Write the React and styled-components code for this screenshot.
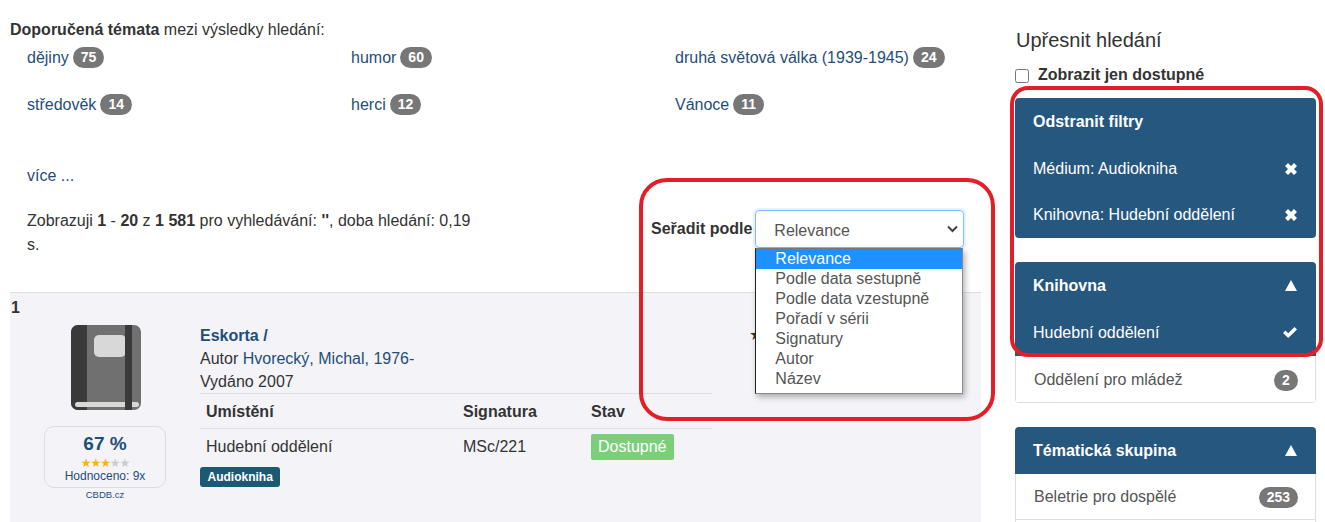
import React from "react";
import styled, { createGlobalStyle } from "styled-components";

const Global = createGlobalStyle`
    html, body {
        margin: 0;
        background: #fff;
    }
    body {
        font-family: "Liberation Sans", Arial, sans-serif;
        font-size: 16px;
        line-height: 24px;
        color: #333;
    }
`;

const Page = styled.div`
    position: relative;
    display: flex;
    width: 1325px;
    height: 522px;
    overflow: hidden;
`;

const Main = styled.main`
    width: 971px;
    margin-left: 10px;
    padding-top: 18px;
`;

const Side = styled.aside`
    width: 301px;
    margin-left: 34px;
    padding-top: 27px;
`;

const Intro = styled.div`
    height: 24px;
`;

const TopicGrid = styled.div`
    display: grid;
    grid-template-columns: repeat(3, 324px);
    grid-auto-rows: 47px;
    padding: 4px 0 0 17px;
`;

const Topic = styled.div`
    display: flex;
    align-items: flex-start;
    gap: 4px;
`;

const Link = styled.a`
    color: #1f4e79;
    text-decoration: none;
`;

const Count = styled.span`
    display: inline-block;
    min-width: 8px;
    margin-top: 1px;
    padding: 3px 8px 4px;
    font-size: 14px;
    line-height: 14px;
    font-weight: 700;
    color: #fff;
    text-align: center;
    background: #777;
    border-radius: 11px;
`;

const More = styled.div`
    padding: 24px 0 0 17px;
`;

const SortRow = styled.div`
    display: flex;
    height: 83px;
    padding: 21px 0 0 17px;
`;

const Summary = styled.div`
    width: 450px;
`;

const SortBox = styled.div`
    display: flex;
    align-items: flex-start;
    margin: 1px 0 0 174px;
`;

const SortLabel = styled.label`
    margin-right: 3px;
    padding-top: 7px;
    font-weight: 700;
`;

const Select = styled.div`
    position: relative;
    display: flex;
    align-items: center;
    justify-content: space-between;
    box-sizing: border-box;
    width: 209px;
    height: 38px;
    padding: 3px 5px 0 18px;
    color: #555;
    border: 1px solid #80bdff;
    border-radius: 4px;
    box-shadow: 0 0 0 2px rgba(128, 189, 255, 0.2);
`;

const Chevron = styled.svg`
    width: 11px;
    height: 8px;
    margin-top: -3px;
`;

const Dropdown = styled.ul`
    position: absolute;
    z-index: 2;
    top: 37px;
    left: -1px;
    box-sizing: border-box;
    width: 208px;
    height: 146px;
    margin: 0;
    padding: 0;
    list-style: none;
    background: #fff;
    border: 1px solid #8a8a8a;
    border-left-color: #222;
    border-top-color: #777;
    box-shadow: 2px 3px 6px rgba(0, 0, 0, 0.3);
`;

const Option = styled.li`
    height: 20px;
    padding-left: 19px;
    line-height: 20px;
    color: ${(p) => (p.$active ? "#fff" : "#555")};
    background: ${(p) => (p.$active ? "#1e90ff" : "transparent")};
`;

const Result = styled.article`
    display: flex;
    box-sizing: border-box;
    height: 240px;
    background: #f3f3f8;
    border-top: 1px solid #dedede;
`;

const Cover = styled.div`
    display: flex;
    flex-direction: column;
    width: 190px;
    flex: none;
`;

const Number = styled.div`
    height: 28px;
    padding: 4px 0 0 1px;
    font-size: 16px;
    line-height: 22px;
    font-weight: 700;
`;

const BookIcon = styled.svg`
    display: block;
    width: 70px;
    height: 86px;
    margin-left: 61px;
`;

const Rating = styled.div`
    box-sizing: border-box;
    width: 122px;
    height: 62px;
    margin: 15px 0 0 34px;
    padding-top: 6px;
    text-align: center;
    border: 1px solid #dcdce2;
    border-radius: 10px;
`;

const Percent = styled.div`
    height: 25px;
    font-size: 19px;
    line-height: 22px;
    font-weight: 700;
    color: #1f4e79;
`;

const Stars = styled.div`
    height: 11px;
    font-family: "DejaVu Sans", sans-serif;
    font-size: 12px;
    line-height: 11px;
    letter-spacing: -1.1px;
    color: #ccc;
    span {
        color: #f5b21b;
    }
`;

const RatedBy = styled.div`
    font-size: 12px;
    line-height: 14px;
    color: #1f4e79;
`;

const Source = styled.div`
    margin: 1px 0 0 34px;
    width: 122px;
    font-size: 9.5px;
    line-height: 12px;
    text-align: center;
    color: #1f4e79;
`;

const Info = styled.div`
    width: 512px;
    flex: none;
    padding-top: 31px;
`;

const Title = styled.div`
    height: 23px;
    line-height: 23px;
    font-weight: 700;
    color: #1f4e79;
`;

const Line = styled.div`
    height: 23px;
    line-height: 23px;
`;

const ItemGrid = styled.div`
    display: grid;
    grid-template-columns: 257px 128px 127px;
    height: 35px;
    align-items: center;
    box-sizing: border-box;
    padding: 1px 0 0 6px;
    border-top: 1px solid #dedede;
    font-weight: ${(p) => (p.$head ? 700 : 400)};
`;

const Available = styled.span`
    justify-self: start;
    padding: 1px 7px;
    color: #fff;
    background: #7bcf7b;
    border-radius: 2px;
`;

const MediaLabel = styled.span`
    display: inline-block;
    margin-top: 4px;
    padding: 0 7.5px;
    font-size: 12px;
    line-height: 20px;
    font-weight: 700;
    color: #fff;
    background: #1c5a73;
    border-radius: 3px;
`;

const Favourite = styled.div`
    margin: 30px 0 0 37px;
    font-family: "DejaVu Sans", sans-serif;
    font-size: 16px;
`;

const SideTitle = styled.h2`
    margin: 0;
    padding-left: 1px;
    font-size: 20px;
    line-height: 26px;
    font-weight: 400;
`;

const OnlyAvailable = styled.label`
    display: flex;
    align-items: center;
    height: 24px;
    margin: 10px 0 11px;
    font-weight: 700;
`;

const Tick = styled.input`
    width: 14px;
    height: 14px;
    margin: 1px 9px 0 0;
`;

const Panel = styled.section`
    margin-bottom: 24px;
    overflow: hidden;
    border-radius: 4px;
`;

const Row = styled.div`
    display: flex;
    align-items: center;
    justify-content: space-between;
    box-sizing: border-box;
    height: ${(p) => p.$h || 47}px;
    padding: ${(p) => (p.$dark ? 0 : 1)}px ${(p) => (p.$dark ? 19 : 17)}px 0 18px;
    color: ${(p) => (p.$dark ? "#fff" : "#555")};
    font-weight: ${(p) => (p.$bold ? 700 : 400)};
    background: ${(p) => (p.$dark ? "#26577f" : "#fff")};
    border: ${(p) => (p.$dark ? "none" : "1px solid #dedede")};
    border-top: none;
`;

const Icon = styled.svg`
    display: block;
    width: ${(p) => p.$w}px;
    height: ${(p) => p.$h}px;
    fill: #fff;
`;

const Cross = () => (
    <Icon $w={12} $h={12} viewBox="0 0 12 12">
        <path d="M3 0 L6 3 L9 0 L12 3 L9 6 L12 9 L9 12 L6 9 L3 12 L0 9 L3 6 L0 3 Z" />
    </Icon>
);

const Check = () => (
    <Icon $w={14} $h={11} viewBox="0 0 14 11">
        <path d="M0 6 L2.5 3.5 L5.2 6.2 L11.5 0 L14 2.5 L5.2 11 Z" />
    </Icon>
);

const Up = () => (
    <Icon $w={12} $h={11} viewBox="0 0 12 11">
        <path d="M6 0 L12 11 H0 Z" />
    </Icon>
);

const Frame = styled.div`
    position: absolute;
    z-index: 3;
    top: ${(p) => p.$top}px;
    left: ${(p) => p.$left}px;
    box-sizing: border-box;
    width: ${(p) => p.$w}px;
    height: ${(p) => p.$h}px;
    border: 4px solid #e21f26;
    border-radius: ${(p) => p.$r}px;
    pointer-events: none;
`;

const topics = [
    ["dějiny", 75],
    ["humor", 60],
    ["druhá světová válka (1939-1945)", 24],
    ["středověk", 14],
    ["herci", 12],
    ["Vánoce", 11],
];

const sortOptions = [
    "Relevance",
    "Podle data sestupně",
    "Podle data vzestupně",
    "Pořadí v sérii",
    "Signatury",
    "Autor",
    "Název",
];

export default function App() {
    return (
        <Page>
            <Global />
            <Main>
                <Intro>
                    <b>Doporučená témata</b> mezi výsledky hledání:
                </Intro>
                <TopicGrid>
                    {topics.map(([name, count]) => (
                        <Topic key={name}>
                            <Link>{name}</Link>
                            <Count>{count}</Count>
                        </Topic>
                    ))}
                </TopicGrid>
                <More>
                    <Link>více ...</Link>
                </More>
                <SortRow>
                    <Summary>
                        Zobrazuji <b>1</b> - <b>20</b> z <b>1 581</b> pro vyhledávání: <b>''</b>, doba hledání: 0,19 s.
                    </Summary>
                    <SortBox>
                        <SortLabel>Seřadit podle</SortLabel>
                        <Select>
                            Relevance
                            <Chevron viewBox="0 0 11 8">
                                <path d="M1 1.5 L5.5 6 L10 1.5" fill="none" stroke="#444" strokeWidth="2" />
                            </Chevron>
                            <Dropdown>
                                {sortOptions.map((o, i) => (
                                    <Option key={o} $active={i === 0}>{o}</Option>
                                ))}
                            </Dropdown>
                        </Select>
                    </SortBox>
                </SortRow>
                <Result>
                    <Cover>
                        <Number>1</Number>
                        <BookIcon viewBox="0 0 70 86">
                            <rect x="0" y="0" width="70" height="85" rx="7" fill="#707070" />
                            <path d="M7 0 H16 V85 H7 A7 7 0 0 1 0 78 V7 A7 7 0 0 1 7 0 Z" fill="#3a3a3a" />
                            <rect x="23" y="10" width="32" height="22" rx="5" fill="#d8d8d8" />
                            <rect x="4" y="77" width="64" height="5" rx="2.5" fill="#d8d8d8" />
                            <rect x="54" y="0" width="7" height="85" fill="#3a3a3a" />
                        </BookIcon>
                        <Rating>
                            <Percent>67 %</Percent>
                            <Stars><span>★★★</span>★★</Stars>
                            <RatedBy>Hodnoceno: 9x</RatedBy>
                        </Rating>
                        <Source>CBDB.cz</Source>
                    </Cover>
                    <Info>
                        <Title>Eskorta /</Title>
                        <Line>Autor <Link>Hvorecký, Michal, 1976-</Link></Line>
                        <Line>Vydáno 2007</Line>
                        <ItemGrid $head>
                            <span>Umístění</span>
                            <span>Signatura</span>
                            <span>Stav</span>
                        </ItemGrid>
                        <ItemGrid>
                            <span>Hudební oddělení</span>
                            <span>MSc/221</span>
                            <Available>Dostupné</Available>
                        </ItemGrid>
                        <MediaLabel>Audiokniha</MediaLabel>
                    </Info>
                    <Favourite>★</Favourite>
                </Result>
            </Main>
            <Side>
                <SideTitle>Upřesnit hledání</SideTitle>
                <OnlyAvailable>
                    <Tick type="checkbox" />
                    Zobrazit jen dostupné
                </OnlyAvailable>
                <Panel>
                    <Row $dark $bold>Odstranit filtry</Row>
                    <Row $dark>Médium: Audiokniha<Cross /></Row>
                    <Row $dark $h={46}>Knihovna: Hudební oddělení<Cross /></Row>
                </Panel>
                <Panel>
                    <Row $dark $bold>Knihovna<Up /></Row>
                    <Row $dark>Hudební oddělení<Check /></Row>
                    <Row>Oddělení pro mládež<Count>2</Count></Row>
                </Panel>
                <Panel>
                    <Row $dark $bold>Tématická skupina<Up /></Row>
                    <Row $h={46}>Beletrie pro dospělé<Count>253</Count></Row>
                    <Row />
                </Panel>
            </Side>
            <Frame $top={178} $left={639} $w={356} $h={243} $r={28} />
            <Frame $top={86} $left={1010} $w={313} $h={271} $r={18} />
        </Page>
    );
}
